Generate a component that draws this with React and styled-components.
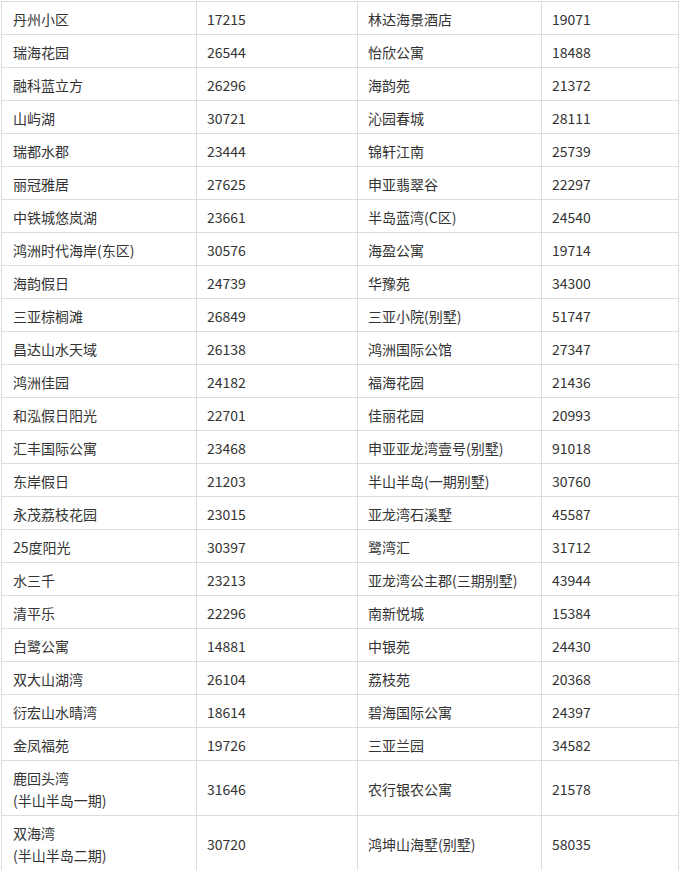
import React from "react";
import styled, { createGlobalStyle } from "styled-components";

const GlobalStyle = createGlobalStyle`
  body {
    margin: 0;
    background: #fff;
  }
`;

const Page = styled.div`
  padding: 1px 0 0 1px;
  width: 682px;
  box-sizing: border-box;
`;

const Table = styled.table`
  border-collapse: collapse;
  table-layout: fixed;
  width: 677px;
  font-family: "Noto Sans CJK SC", "Noto Sans", sans-serif;
  font-size: 14px;
  color: #333;
`;

const Col = styled.col`
  width: ${(p) => p.$w}px;
`;

const Cell = styled.td`
  border: 1px solid #dcdcdc;
  padding: 6px 10px 4px ${(p) => (p.$first ? "11px" : "10px")};
  line-height: 22px;
  vertical-align: middle;
  text-align: left;
  word-break: keep-all;
`;

const widths = [195, 161, 184, 137];

const rows = [
  ["丹州小区", "17215", "林达海景酒店", "19071"],
  ["瑞海花园", "26544", "怡欣公寓", "18488"],
  ["融科蓝立方", "26296", "海韵苑", "21372"],
  ["山屿湖", "30721", "沁园春城", "28111"],
  ["瑞都水郡", "23444", "锦轩江南", "25739"],
  ["丽冠雅居", "27625", "申亚翡翠谷", "22297"],
  ["中铁城悠岚湖", "23661", "半岛蓝湾(C区)", "24540"],
  ["鸿洲时代海岸(东区)", "30576", "海盈公寓", "19714"],
  ["海韵假日", "24739", "华豫苑", "34300"],
  ["三亚棕榈滩", "26849", "三亚小院(别墅)", "51747"],
  ["昌达山水天域", "26138", "鸿洲国际公馆", "27347"],
  ["鸿洲佳园", "24182", "福海花园", "21436"],
  ["和泓假日阳光", "22701", "佳丽花园", "20993"],
  ["汇丰国际公寓", "23468", "申亚亚龙湾壹号(别墅)", "91018"],
  ["东岸假日", "21203", "半山半岛(一期别墅)", "30760"],
  ["永茂荔枝花园", "23015", "亚龙湾石溪墅", "45587"],
  ["25度阳光", "30397", "鹭湾汇", "31712"],
  ["水三千", "23213", "亚龙湾公主郡(三期别墅)", "43944"],
  ["清平乐", "22296", "南新悦城", "15384"],
  ["白鹭公寓", "14881", "中银苑", "24430"],
  ["双大山湖湾", "26104", "荔枝苑", "20368"],
  ["衍宏山水晴湾", "18614", "碧海国际公寓", "24397"],
  ["金凤福苑", "19726", "三亚兰园", "34582"],
  [["鹿回头湾", "(半山半岛一期)"], "31646", "农行银农公寓", "21578"],
  [["双海湾", "(半山半岛二期)"], "30720", "鸿坤山海墅(别墅)", "58035"],
];

const renderName = (v) =>
  Array.isArray(v)
    ? v.map((line, i) => (
        <React.Fragment key={i}>
          {i > 0 && <br />}
          {line}
        </React.Fragment>
      ))
    : v;

const App = () => {
  return (
    <Page>
      <GlobalStyle />
      <Table>
        <colgroup>
          {widths.map((w, i) => (
            <Col key={i} $w={w} />
          ))}
        </colgroup>
        <tbody>
          {rows.map((r, i) => (
            <tr key={i}>
              <Cell $first>{renderName(r[0])}</Cell>
              <Cell>{r[1]}</Cell>
              <Cell>{r[2]}</Cell>
              <Cell>{r[3]}</Cell>
            </tr>
          ))}
        </tbody>
      </Table>
    </Page>
  );
};

export default App;
